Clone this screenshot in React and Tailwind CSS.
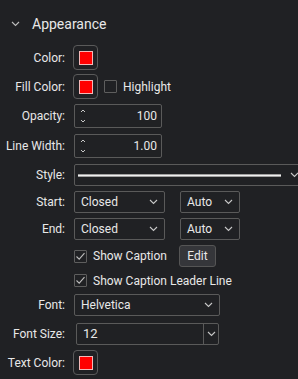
import React from 'react';

const Chevron = ({ className = '' }) => (
  <svg width="9" height="6" viewBox="0 0 9 6" className={className}>
    <path d="M1 1 L4.5 4.5 L8 1" fill="none" stroke="currentColor" strokeWidth="1.1" />
  </svg>
);

const Check = () => (
  <svg width="11" height="11" viewBox="0 0 11 11">
    <path d="M1.5 5.5 L4.2 8.2 L9.5 2.2" fill="none" stroke="#bdbdbd" strokeWidth="1.1" />
  </svg>
);

const Label = ({ children }) => (
  <div className="w-[65px] shrink-0 text-right whitespace-nowrap">{children}</div>
);

const Swatch = () => (
  <div className="ml-[8px] w-[25px] h-[25px] rounded-[4px] border border-[#5a5a5a] flex items-center justify-center">
    <div className="w-[14px] h-[14px] bg-[#ff0000] border border-[#f3b8b8]" />
  </div>
);

const Box = ({ checked }) => (
  <div className="w-[13px] h-[13px] border border-[#5e5e5e] rounded-[1px] flex items-center justify-center">
    {checked && <Check />}
  </div>
);

const Select = ({ value, className = '' }) => (
  <div className={`h-full border border-[#5a5a5a] rounded-[2px] flex items-center pl-[6px] pr-[6px] ${className}`}>
    <span className="flex-1">{value}</span>
    <Chevron className="text-[#c8c8c8]" />
  </div>
);

const Spin = ({ value }) => (
  <div className="ml-[9px] w-[88px] h-full border border-[#5a5a5a] rounded-[2px] flex items-center pl-[5px] pr-[4px]">
    <div className="flex flex-col text-[#c8c8c8] gap-[6px]">
      <svg width="6" height="4" viewBox="0 0 6 4"><path d="M1 3 L3 1 L5 3" fill="none" stroke="currentColor" strokeWidth="1" /></svg>
      <svg width="6" height="4" viewBox="0 0 6 4"><path d="M1 1 L3 3 L5 1" fill="none" stroke="currentColor" strokeWidth="1" /></svg>
    </div>
    <span className="flex-1 text-right">{value}</span>
  </div>
);

export default function App() {
  return (
    <div className="w-[298px] h-[379px] overflow-hidden bg-[#202124] text-[#e8e8e8] text-[12px] font-['Roboto',sans-serif]">
      <div className="h-[24px] mt-[12px] flex items-center">
        <Chevron className="ml-[11px] text-[#bdbdbd]" />
        <span className="ml-[12px] text-[14px]">Appearance</span>
      </div>

      <div className="mt-[9px] h-[25px] flex items-center">
        <Label>Color:</Label>
        <Swatch />
      </div>

      <div className="mt-[4px] h-[25px] flex items-center">
        <Label>Fill Color:</Label>
        <Swatch />
        <div className="ml-[6px]"><Box /></div>
        <span className="ml-[6px]">Highlight</span>
      </div>

      <div className="mt-[5px] h-[24px] flex items-center">
        <Label>Opacity:</Label>
        <Spin value="100" />
      </div>

      <div className="mt-[6px] h-[24px] flex items-center">
        <Label>Line Width:</Label>
        <Spin value="1.00" />
      </div>

      <div className="mt-[6px] h-[22px] flex items-center">
        <Label>Style:</Label>
        <div className="ml-[9px] w-[232px] shrink-0 h-full border border-[#5a5a5a] rounded-[2px] flex items-center pl-[3px] pr-[6px]">
          <div className="w-[203px] h-[3px] bg-[#f0f0f0] border-y border-[#a0a0a0]" />
          <Chevron className="ml-[9px] text-[#c8c8c8]" />
        </div>
      </div>

      <div className="mt-[5px] h-[22px] flex items-center">
        <Label>Start:</Label>
        <Select value="Closed" className="ml-[9px] w-[91px]" />
        <Select value="Auto" className="ml-[15px] w-[60px]" />
      </div>

      <div className="mt-[5px] h-[22px] flex items-center">
        <Label>End:</Label>
        <Select value="Closed" className="ml-[9px] w-[91px]" />
        <Select value="Auto" className="ml-[15px] w-[60px]" />
      </div>

      <div className="mt-[5px] h-[22px] flex items-center">
        <div className="w-[74px] shrink-0" />
        <Box checked />
        <span className="ml-[6px]">Show Caption</span>
        <div className="ml-[12px] w-[37px] h-[22px] bg-[#35363a] border border-[#555] rounded-[3px] flex items-center justify-center">Edit</div>
      </div>

      <div className="mt-[3px] h-[21px] flex items-center">
        <div className="w-[74px] shrink-0" />
        <Box checked />
        <span className="ml-[6px]">Show Caption Leader Line</span>
      </div>

      <div className="mt-[3px] h-[22px] flex items-center">
        <Label>Font:</Label>
        <Select value="Helvetica" className="ml-[9px] w-[146px]" />
      </div>

      <div className="mt-[7px] h-[22px] flex items-center">
        <Label>Font Size:</Label>
        <div className="ml-[11px] w-[143px] h-full border border-[#5a5a5a] rounded-[2px] flex items-center">
          <span className="flex-1 pl-[6px] text-[13px]">12</span>
          <div className="w-[15px] h-full border-l border-[#5a5a5a] flex items-center justify-center">
            <Chevron className="text-[#c8c8c8]" />
          </div>
        </div>
      </div>

      <div className="mt-[5px] h-[25px] flex items-center">
        <Label>Text Color:</Label>
        <Swatch />
      </div>
    </div>
  );
}
